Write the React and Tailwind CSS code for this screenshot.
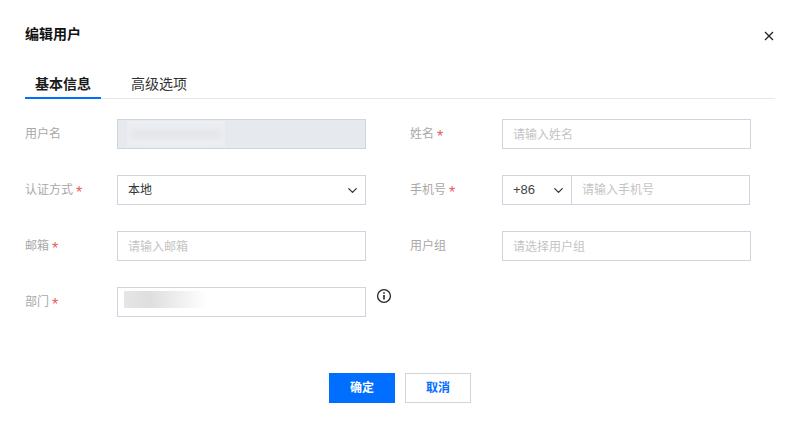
import { ChevronDown } from 'lucide-react';

const cjk = "font-['Inter','Noto_Sans_CJK_SC',sans-serif]";

// 表单左侧标签
const Label = ({ text, required }) => (
  <div className="w-[92px] shrink-0 flex items-center h-[30px] text-[12px] text-[#a8a8a8]">
    <span>{text}</span>
    {required && <span className="ml-[3px] mt-[5px] text-[16px] leading-none text-[#e85c5c] font-['Liberation_Sans',sans-serif]">*</span>}
  </div>
);

const Input = ({ placeholder, className = '' }) => (
  <input
    type="text"
    placeholder={placeholder}
    readOnly
    className={`w-[249px] h-[30px] px-[10px] border border-[#cfd5de] bg-white text-[12px] outline-none placeholder:text-[#c4c4c4] ${className}`}
  />
);

const Row = ({ label, required, children }) => (
  <div className="flex items-start">
    <Label text={label} required={required} />
    {children}
  </div>
);

export default function App() {
  return (
    <div className={`w-[787px] h-[421px] bg-white pl-[25px] pr-[12px] overflow-hidden ${cjk}`}>
      {/* 标题栏 */}
      <div className="flex items-start justify-between h-[65px] pt-[24px]">
        <h1 className="text-[14px] leading-[20px] font-semibold text-[#111]">编辑用户</h1>
        <svg width="10" height="10" viewBox="0 0 10 10" className="mt-[7px] mr-[1px] text-[#222]" fill="none" stroke="currentColor" strokeWidth="1.3">
          <path d="M1 1l8 8M9 1l-8 8" />
        </svg>
      </div>

      {/* 标签页 */}
      <div className="flex h-[34px] border-b border-[#e4e7ef] text-[14px]">
        <div className="w-[76px] h-[34px] px-[10px] leading-[38px] font-semibold text-[#1a1a1a] border-b-2 border-[#006eff]">基本信息</div>
        <div className="ml-[20px] px-[10px] leading-[38px] text-[#333]">高级选项</div>
      </div>

      {/* 表单 */}
      <div className="grid grid-cols-[341px_341px] gap-x-[44px] gap-y-[26px] mt-[20px]">
        <Row label="用户名">
          <div className="relative w-[249px] h-[30px] border border-[#cfd5de] bg-[#e6e9ee] overflow-hidden">
            <div className="absolute left-[9px] top-[1px] w-[98px] h-[26px] bg-[#eceef2]">
              <div className="mx-[4px] mt-[9px] h-[8px] bg-[#e2e4e8] blur-[3px]" />
            </div>
          </div>
        </Row>
        <Row label="姓名" required>
          <Input placeholder="请输入姓名" />
        </Row>

        <Row label="认证方式" required>
          <div className="w-[249px] h-[30px] pl-[10px] pr-[5px] border border-[#cfd5de] bg-white flex items-center justify-between text-[12px] text-[#333]">
            <span>本地</span>
            <ChevronDown size={15} strokeWidth={2} className="text-[#333]" />
          </div>
        </Row>
        <Row label="手机号" required>
          <div className="w-[248px] h-[30px] border border-[#cfd5de] flex items-center text-[12px]">
            <div className="w-[69px] h-full pl-[10px] pr-[5px] border-r border-[#cfd5de] flex items-center justify-between text-[#444]">
              <span className="font-['Liberation_Sans',sans-serif] text-[13px]">+86</span>
              <ChevronDown size={15} strokeWidth={2} className="text-[#333]" />
            </div>
            <span className="pl-[10px] text-[#c4c4c4]">请输入手机号</span>
          </div>
        </Row>

        <Row label="邮箱" required>
          <Input placeholder="请输入邮箱" />
        </Row>
        <Row label="用户组">
          <Input placeholder="请选择用户组" />
        </Row>

        <Row label="部门" required>
          <div className="relative shrink-0 w-[249px] h-[30px] border border-[#cfd5de] bg-white overflow-hidden">
            <div className="absolute left-[6px] top-[3px] w-[103px] h-[17px] bg-gradient-to-r from-[#e6e6e6] via-[#dedede] via-25% to-[#ffffff] to-80%" />
          </div>
          <svg width="16" height="16" viewBox="0 0 16 16" className="shrink-0 ml-[10px] mt-[1px] text-[#222]" fill="none" stroke="currentColor">
            <circle cx="8" cy="8" r="6.4" strokeWidth="1.3" />
            <path d="M8 7v4.4" strokeWidth="1.6" />
            <path d="M8 4.2v1.6" strokeWidth="1.6" />
          </svg>
        </Row>
      </div>

      {/* 底部按钮 */}
      <div className="flex justify-center gap-[10px] mt-[56px] text-[12px]">
        <button className="w-[66px] h-[30px] bg-[#006eff] text-white font-bold">确定</button>
        <button className="w-[66px] h-[30px] border border-[#cfd5de] bg-white text-[#006eff] font-semibold">取消</button>
      </div>
    </div>
  );
}
